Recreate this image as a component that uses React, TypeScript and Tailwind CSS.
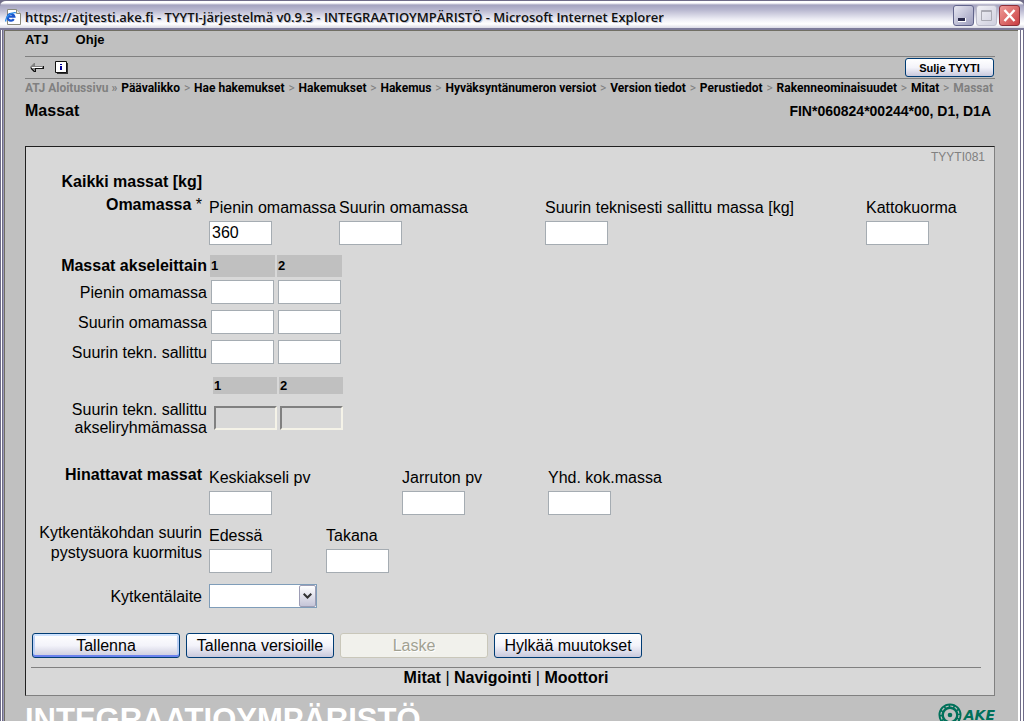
import { Fragment, useState } from 'react'
import type { ReactNode } from 'react'
import clsx from 'clsx'

const breadcrumbs = [
  'Päävalikko',
  'Hae hakemukset',
  'Hakemukset',
  'Hakemus',
  'Hyväksyntänumeron versiot',
  'Version tiedot',
  'Perustiedot',
  'Rakenneominaisuudet',
  'Mitat'
]

const axleRows = [
  { id: 'pienin', label: 'Pienin omamassa' },
  { id: 'suurin', label: 'Suurin omamassa' },
  { id: 'tekn', label: 'Suurin tekn. sallittu' }
]

const inputClass = 'block h-6 w-[63px] border border-[#a5acb2] bg-white px-0.5 text-[16px] leading-5 outline-none'

const sunkenClass =
  'block h-6 w-[63px] border-2 border-t-[#808080] border-l-[#808080] border-r-[#f5f3e8] border-b-[#f5f3e8] bg-[#d8d8d8] px-0.5 text-[16px] leading-5'

function Field({ id, label, defaultValue }: { id: string; label: string; defaultValue?: string }) {
  return (
    <div className="pt-1">
      <label htmlFor={id} className="mb-[3px] block whitespace-nowrap">
        {label}
      </label>
      <input id={id} type="text" defaultValue={defaultValue} className={inputClass} />
    </div>
  )
}

function FormRow({ label, className, children }: { label: ReactNode; className?: string; children?: ReactNode }) {
  return (
    <div className={clsx('grid grid-cols-[176px_1fr] gap-x-[7px]', className)}>
      <div className="pt-px text-right">{label}</div>
      {children}
    </div>
  )
}

function XpButton({ children, primary, disabled, className }: { children: ReactNode; primary?: boolean; disabled?: boolean; className?: string }) {
  return (
    <button
      type="button"
      disabled={disabled}
      className={clsx(
        'rounded-[3px] border',
        disabled
          ? 'border-[#c9c7ba] bg-[#f1f1ec] text-[#a1a192] [text-shadow:1px_1px_0_#fff]'
          : 'border-[#003c74] bg-linear-to-b from-white via-[#f3f3fa] to-[#c9c9dc] text-black',
        primary && 'shadow-[inset_0_2px_0_#cee3ff,inset_0_-2px_0_#6a82ee,inset_2px_0_0_#bcd0f5,inset_-2px_0_0_#bcd0f5]',
        className
      )}
    >
      {children}
    </button>
  )
}

function IeIcon() {
  return (
    <svg className="h-4 w-4" viewBox="0 0 16 16">
      <path d="M2.500.5h9l4 4v11h-13z" fill="#fff" stroke="#8a8a7c" />
      <path d="M11.500.5v4h4" fill="#e4e4d8" stroke="#8a8a7c" />
      <path d="M8.800 10.200A3.400 3.400 0 1 1 9.300 7.600H3.500" fill="none" stroke="#1c55cc" strokeWidth="2.200" />
      <path d="M1 12.500C-.5 9 6 2.500 10.800 3.800" fill="none" stroke="#2f8ee8" strokeWidth="1.400" />
    </svg>
  )
}

function TitleBar() {
  const frame = 'flex h-[21px] w-[21px] items-center justify-center rounded-[3px] border'
  return (
    <header className="flex h-[30px] items-center justify-between rounded-t-md border-t border-b-2 border-t-[#6f6c88] border-b-[#7c7a99] bg-[linear-gradient(to_bottom,#fff_0,#fff_2px,#a5a4c0_4px,#b9b8d0_9px,#ececf4_18px,#fff_23px,#d9d9e5_27px)] pr-[4px] pl-[5px]">
      <div className="flex min-w-0 items-center gap-1 pt-1">
        <IeIcon />
        <h1 className="truncate font-['Open_Sans',sans-serif] text-[13px] leading-5 font-semibold text-[#0f1010] [text-shadow:1px_1px_0_#c4c4d4]">
          https://atjtesti.ake.fi - TYYTI-järjestelmä v0.9.3 - INTEGRAATIOYMPÄRISTÖ - Microsoft Internet Explorer
        </h1>
      </div>
      <div className="flex shrink-0 gap-0.5 pt-0.5">
        <button type="button" aria-label="Minimize" className={clsx(frame, 'border-[#62658c] bg-linear-to-br from-[#e8e8f2] to-[#9d9dbd]')}>
          <svg className="h-[19px] w-[19px]" viewBox="0 0 19 19">
            <path d="M4 12h8v4H4z" fill="#fff" />
            <path d="M4 12h7v3H4z" fill="#2b2b4c" />
          </svg>
        </button>
        <button type="button" aria-label="Maximize" disabled className={clsx(frame, 'border-[#bcbccb] bg-linear-to-br from-[#f1f1f6] to-[#cfcfde]')}>
          <svg className="h-[19px] w-[19px]" viewBox="0 0 19 19">
            <path d="M4.500 4.500h10v10h-10zM4 5.500h11" fill="none" stroke="#a9a9b3" />
          </svg>
        </button>
        <button type="button" aria-label="Close" className={clsx(frame, 'border-[#8d2f38] bg-linear-to-br from-[#ee9a98] to-[#c93a42]')}>
          <svg className="h-[19px] w-[19px]" viewBox="0 0 19 19">
            <path d="M4.500 4l10 11M14.500 4l-10 11" stroke="#fff" strokeWidth="2.400" />
          </svg>
        </button>
      </div>
    </header>
  )
}

function Toolbar() {
  return (
    <div className="flex h-[23px] items-center justify-between border-y border-[#808080] pr-px">
      <div className="flex items-center gap-[11px] pl-[5px]">
        <button type="button" aria-label="Takaisin">
          <svg className="block h-2.5 w-3.5" viewBox="0 0 14 10">
            <path d="M4 0h1v3h8v3H5v3H4L0 5V4z" fill="#808080" />
            <path d="M1 5h1v1h1v1h1v1h1V5h8V3h1v3H6v3H4L1 6z" fill="#111" />
            <path d="M2 4h10v1H2z" fill="#fff" />
          </svg>
        </button>
        <button type="button" aria-label="Tiedot">
          <svg className="block h-[13px] w-[13px]" viewBox="0 0 13 13">
            <path d="M2 2h11v11H2z" fill="#333" />
            <path d="M.5.5h11v11H.5z" fill="#fff" stroke="#111" />
            <path d="M5 3h2v1H5zM5 5h2v4H5z" fill="#000099" />
          </svg>
        </button>
      </div>
      <XpButton className="h-[19px] w-[89px] text-[11px] leading-4 font-bold">Sulje TYYTI</XpButton>
    </div>
  )
}

function Breadcrumbs() {
  return (
    <nav className="flex h-[18px] justify-between overflow-hidden pr-0.5 font-[Roboto,sans-serif] text-[12px] leading-[18px] font-bold whitespace-nowrap text-[#808080]">
      <span>ATJ Aloitussivu »</span>
      {breadcrumbs.map(name => (
        <Fragment key={name}>
          <a href="#" className="text-black">
            {name}
          </a>
          <span className="font-normal">&gt;</span>
        </Fragment>
      ))}
      <span>Massat</span>
    </nav>
  )
}

function AxleTable() {
  return (
    <table className="mt-[10px] border-separate border-spacing-x-[2px] border-spacing-y-0">
      <thead>
        <tr className="h-[22px]">
          <th scope="col" className="w-[180px] p-0 pr-px text-right whitespace-nowrap">
            Massat akseleittain
          </th>
          {[1, 2].map(n => (
            <th key={n} scope="col" className="w-[65px] bg-[#c0c0c0] p-0 pl-px text-left text-[13px]">
              {n}
            </th>
          ))}
        </tr>
      </thead>
      <tbody>
        {axleRows.map(row => (
          <tr key={row.id} className="h-[30px]">
            <th scope="row" className="p-0 pt-px pr-px text-right font-normal">
              {row.label}
            </th>
            {[1, 2].map(n => (
              <td key={n} className="p-0 px-px">
                <input type="text" aria-label={`${row.label} ${n}`} className={inputClass} />
              </td>
            ))}
          </tr>
        ))}
      </tbody>
    </table>
  )
}

function AxleGroupTable() {
  return (
    <table className="mt-[10px] border-separate border-spacing-x-[2px] border-spacing-y-0">
      <thead>
        <tr className="h-[17px] text-[13px] leading-[17px]">
          <td className="w-[183px] p-0" />
          {[1, 2].map(n => (
            <th key={n} scope="col" className="w-[64px] bg-[#c0c0c0] p-0 pl-px text-left">
              {n}
            </th>
          ))}
        </tr>
      </thead>
      <tbody>
        <tr className="h-[48px]">
          <th scope="row" className="p-0 pt-px pr-1 text-right leading-[18px] font-normal">
            Suurin tekn. sallittu
            <br />
            akseliryhmämassa
          </th>
          {[1, 2].map(n => (
            <td key={n} className="p-0 pl-px">
              <input type="text" readOnly aria-label={`Akseliryhmämassa ${n}`} className={sunkenClass} />
            </td>
          ))}
        </tr>
      </tbody>
    </table>
  )
}

function CouplingSelect() {
  const [value, setValue] = useState('')
  return (
    <div className="relative h-6 w-[108px]">
      <select
        id="kytkentalaite"
        value={value}
        onChange={e => setValue(e.target.value)}
        className="h-6 w-full appearance-none border border-[#7f9db9] bg-white pl-1 outline-none"
      >
        <option value=""></option>
      </select>
      <span className="pointer-events-none absolute top-px right-px flex h-[22px] w-[17px] items-center justify-center rounded-xs border border-[#9d9db5] bg-linear-to-b from-white to-[#c5c5d8]">
        <svg className="h-1.5 w-[9px]" viewBox="0 0 9 6">
          <path d="M.7.7l3.800 3.800L8.300.7" fill="none" stroke="#333" strokeWidth="2" />
        </svg>
      </span>
    </div>
  )
}

function AkeLogo() {
  return (
    <div className="flex items-center gap-0.5 pt-[7px] text-[#00705a]">
      <svg className="h-6 w-6" viewBox="0 0 24 24" fill="none" stroke="currentColor">
        <circle cx="12" cy="12" r="8.800" strokeWidth="5.400" />
        <circle cx="12" cy="12" r="9" stroke="#c0c0c0" strokeWidth="1.200" strokeDasharray="3 1.710" />
        <circle cx="12" cy="12" r="2.300" fill="currentColor" stroke="none" />
      </svg>
      <span className="font-['DejaVu_Sans',sans-serif] text-[14px] leading-5 font-bold italic">AKE</span>
    </div>
  )
}

export default function App() {
  return (
    <div className="flex h-screen flex-col overflow-hidden bg-[#6f6c88] font-['Liberation_Sans',Arial,sans-serif] text-[16px] leading-5 text-black">
      <TitleBar />
      <div className="flex min-h-0 flex-1 border-r border-l border-[#6f6c88]">
        <div className="w-[3px] shrink-0 border-r border-l border-l-white border-r-[#9a99b8] bg-[#6f6c88]" />
        <main className="min-w-0 flex-1 border-t border-l border-[#716f64] bg-[#c0c0c0] pr-[23px] pl-5">
          <nav className="flex h-[25px] gap-[27px] pt-px text-[13px] leading-4 font-bold">
            <a href="#">ATJ</a>
            <a href="#">Ohje</a>
          </nav>
          <Toolbar />
          <Breadcrumbs />
          <div className="flex h-7 items-center justify-between font-bold">
            <h2>Massat</h2>
            <p className="pr-1 text-[14px]">FIN*060824*00244*00, D1, D1A</p>
          </div>

          <form className="mt-[21px] border border-t-[#202020] border-r-[#808080] border-b-[#808080] border-l-[#202020] bg-[#d8d8d8] pb-[7px]">
            <p className="pr-[9px] text-right text-[12px] text-[#808080]">TYYTI081</p>

            <FormRow className="mt-1" label={<h3 className="font-bold">Kaikki massat [kg]</h3>} />
            <FormRow
              className="mt-0.5"
              label={
                <>
                  <b>Omamassa</b> *
                </>
              }
            >
              <div className="grid grid-cols-[130px_206px_321px_1fr]">
                <Field id="pienin-omamassa" label="Pienin omamassa" defaultValue="360" />
                <Field id="suurin-omamassa" label="Suurin omamassa" />
                <Field id="tekn-massa" label="Suurin teknisesti sallittu massa [kg]" />
                <Field id="kattokuorma" label="Kattokuorma" />
              </div>
            </FormRow>

            <AxleTable />
            <AxleGroupTable />

            <FormRow className="mt-[22px]" label={<h3 className="font-bold">Hinattavat massat</h3>}>
              <div className="grid grid-cols-[193px_146px_1fr]">
                <Field id="keskiakseli" label="Keskiakseli pv" />
                <Field id="jarruton" label="Jarruton pv" />
                <Field id="yhd-massa" label="Yhd. kok.massa" />
              </div>
            </FormRow>
            <FormRow
              className="mt-[7px]"
              label={
                <>
                  Kytkentäkohdan suurin
                  <br />
                  pystysuora kuormitus
                </>
              }
            >
              <div className="grid grid-cols-[117px_1fr]">
                <Field id="edessa" label="Edessä" />
                <Field id="takana" label="Takana" />
              </div>
            </FormRow>
            <FormRow className="mt-[11px] items-center" label={<label htmlFor="kytkentalaite">Kytkentälaite</label>}>
              <CouplingSelect />
            </FormRow>

            <div className="mt-[25px] flex gap-1.5 pl-1.5">
              <XpButton primary className="h-[25px] w-[148px]">Tallenna</XpButton>
              <XpButton className="h-[25px] w-[148px]">Tallenna versioille</XpButton>
              <XpButton disabled className="h-[25px] w-[148px]">Laske</XpButton>
              <XpButton className="h-[25px] w-[148px]">Hylkää muutokset</XpButton>
            </div>
            <nav className="mt-[9px] mr-[13px] ml-[5px] border-t border-[#808080] text-center">
              <a href="#" className="font-bold">Mitat</a> | <a href="#" className="font-bold">Navigointi</a> |{' '}
              <a href="#" className="font-bold">Moottori</a>
            </nav>
          </form>

          <footer className="flex items-start justify-between">
            <p className="pt-1 text-[31px] leading-10 font-bold text-white">INTEGRAATIOYMPÄRISTÖ</p>
            <AkeLogo />
          </footer>
        </main>
        <div className="w-[5px] shrink-0 border-r-2 border-l-2 border-l-white border-r-white bg-[#6f6c88]" />
      </div>
    </div>
  )
}
